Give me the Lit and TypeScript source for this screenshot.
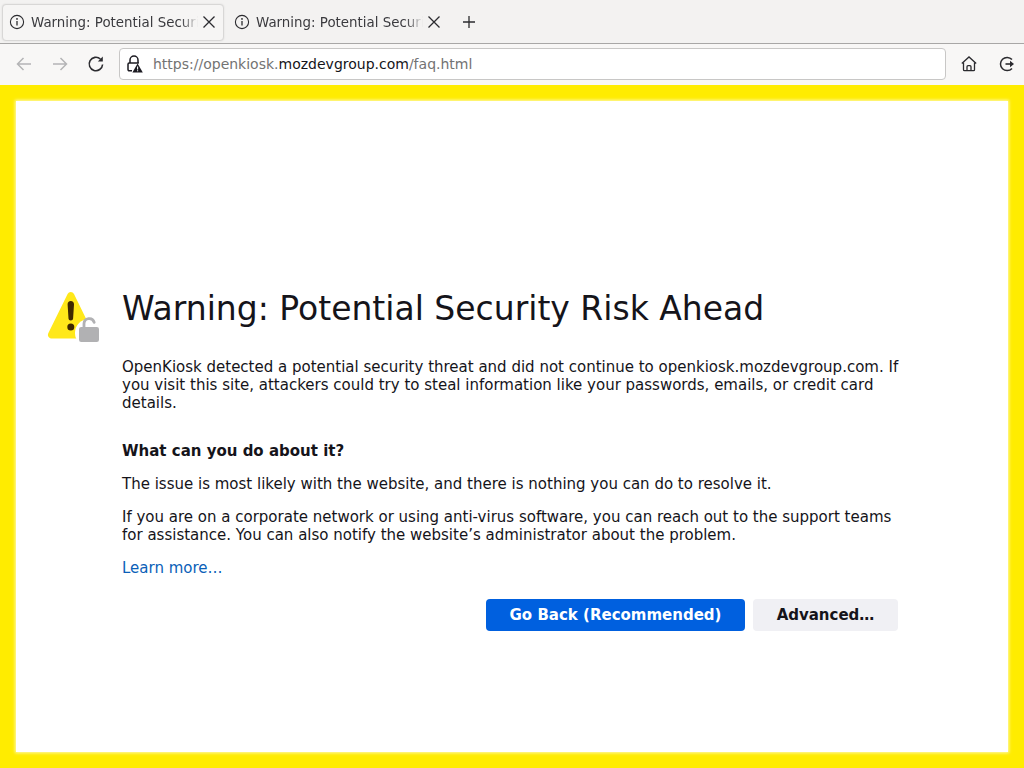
import { LitElement, html, css, svg } from "lit";
import { customElement } from "lit/decorators.js";

const info = svg`<svg class="ic16" viewBox="0 0 16 16" fill="none" stroke="#2b2b2f" stroke-width="1.1"><circle cx="8" cy="8" r="6.6"/><path d="M8 7v4.6" stroke-width="1.3"/><circle cx="8" cy="4.9" r=".9" fill="#2b2b2f" stroke="none"/></svg>`;
const close = svg`<svg class="ic16" viewBox="0 0 16 16" fill="none" stroke="#2b2b2f" stroke-width="1.3"><path d="M2.5 2.5l11 11M13.5 2.5l-11 11"/></svg>`;

@customElement("app-root")
export class AppRoot extends LitElement {
  static styles = css`
    :host { display: flex; flex-direction: column; width: 1024px; height: 768px; overflow: hidden; font-family: "DejaVu Sans", sans-serif; color: #15141a; background: #fff; }
    .ic16 { width: 16px; height: 16px; flex: none; display: block; }
    .tabs { flex: none; box-sizing: border-box; background: #f3f2f1; border-bottom: 1px solid #a8a7a6; display: flex; align-items: flex-start; padding: 4px 0 0 2px; height: 44px; }
    .tab { width: 222px; height: 37px; box-sizing: border-box; padding: 0 6px 1px 6px; display: flex; align-items: center; font-size: 13.4px; color: #3a3a3e; margin-right: 3px; border: 1px solid transparent; border-radius: 4px; }
    .tab.on { background: #f6f5f4; border-color: #d8d7d6; box-shadow: 0 0 2px rgba(0,0,0,.1); }
    .tab .title { flex: 1; min-width: 0; margin-left: 6px; white-space: nowrap; overflow: hidden; -webkit-mask-image: linear-gradient(to right, #000 90%, transparent); mask-image: linear-gradient(to right, #000 90%, transparent); }
    .tab .x { margin-left: 3px; }
    .plus { margin: 10px 0 0 9px; }
    .nav { height: 41px; flex: none; box-sizing: border-box; background: #f8f7f6; display: flex; align-items: center; padding: 0 9px 2px 15px; }
    .nbtn { flex: none; width: 18px; height: 18px; display: block; }
    .back { margin-right: 18px; }
    .fwd { margin-right: 18px; }
    .urlbar { flex: 1; height: 32px; margin: 0 14px 0 14px; box-sizing: border-box; background: #fff; border: 1px solid #c8c7c6; border-radius: 4px; display: flex; align-items: center; padding-left: 5px; font-size: 14px; color: #737373; }
    .urlbar b { font-weight: 400; color: #15141a; }
    .lock { width: 18px; height: 18px; margin-right: 10px; flex: none; }
    .home { margin-right: 19px; }
    .page { flex: 1; min-height: 0; box-sizing: border-box; background: #ffec00; padding: 16px; }
    .inner { height: 100%; box-sizing: border-box; background: #fff; box-shadow: 0 0 3px 1px rgba(255,255,255,.7); display: flex; flex-direction: column; justify-content: flex-start; padding: 185px 107px 0 30px; }
    .content { display: flex; gap: 0; }
    .warn { width: 76px; flex: none; height: 60px; }
    .warn svg { display: block; width: 60px; height: 60px; }
    .text { flex: 1; font-size: 15px; line-height: 18px; min-width: 0; }
    h1 { margin: 0 0 26px; font-size: 33px; font-weight: 400; line-height: 46px; color: #15141a; white-space: nowrap; }
    p { margin: 0 0 15px; }
    .text .intro { margin-bottom: 30px; }
    .text .h { font-weight: 700; margin-bottom: 15px; font-size: 15px; }
    a { text-decoration: none; display: block; margin: 0 0 22px; color: #0b5fb8; }
    .actions { display: flex; justify-content: flex-end; gap: 8px; margin-right: 3px; }
    .btn { height: 32px; box-sizing: border-box; border-radius: 4px; font-size: 15px; font-weight: 700; display: flex; align-items: center; justify-content: center; }
    .pri { width: 259px; background: #0060df; color: #fff; }
    .sec { width: 145px; background: #f0f0f4; color: #15141a; }
  `;

  tab(on: boolean) {
    return html`<div class="tab ${on ? "on" : ""}">${info}<span class="title">Warning: Potential Security Risk Ahead</span><span class="x">${close}</span></div>`;
  }

  render() {
    return html`
      <div class="tabs">
        ${this.tab(true)}${this.tab(false)}
        <svg class="ic16 plus" viewBox="0 0 16 16" fill="none" stroke="#2b2b2f" stroke-width="1.3"><path d="M8 2v12M2 8h12"/></svg>
      </div>
      <div class="nav">
        <svg class="nbtn back" viewBox="0 0 18 18" fill="none" stroke="#b4b4b6" stroke-width="1.5"><path d="M16 9H2.5M8.5 3L2.5 9l6 6"/></svg>
        <svg class="nbtn fwd" viewBox="0 0 18 18" fill="none" stroke="#b4b4b6" stroke-width="1.5"><path d="M2 9h13.5M9.5 3l6 6-6 6"/></svg>
        <svg class="nbtn" viewBox="0 0 18 18" fill="none" stroke="#2b2b2f" stroke-width="1.6"><path d="M15.6 9.5A6.7 6.7 0 1 1 13.4 4"/><path d="M15.8 1.6v5h-5z" fill="#2b2b2f" stroke="none"/></svg>
        <div class="urlbar">
          <svg class="lock" viewBox="0 0 18 18" fill="none" stroke="#1c1b22" stroke-width="1.5"><path d="M5 8V5a4 4 0 0 1 8 0v3"/><path d="M7 15.8H4.2A1.2 1.2 0 0 1 3 14.6V9.2A1.2 1.2 0 0 1 4.2 8h9.6"/><path d="M12.6 8.6L7.4 17.6h10.4z" fill="#1c1b22" stroke="none"/><path d="M12.6 11.4v3M12.6 15.2v1.1" stroke="#fff" stroke-width="1.1"/></svg>
          <span>https://openkiosk.<b>mozdevgroup.com</b>/faq.html</span>
        </div>
        <svg class="nbtn home" viewBox="0 0 18 18" fill="none" stroke="#2b2b2f" stroke-width="1.3"><path d="M1.8 8.6L9 2l7.2 6.6"/><path d="M3.5 7.5v7.2a1 1 0 0 0 1 1h9a1 1 0 0 0 1-1V7.5"/><path d="M7 15.7v-4a1 1 0 0 1 1-1h2a1 1 0 0 1 1 1v4"/></svg>
        <svg class="nbtn" viewBox="0 0 18 18" fill="none" stroke="#2b2b2f" stroke-width="1.5"><path d="M15 4.6A6.6 6.6 0 1 0 15 13.4"/><path d="M8.5 9H15" stroke-width="1.6"/><path d="M13 5.8L17 9l-4 3.2z" fill="#2b2b2f" stroke="none"/></svg>
      </div>
      <div class="page">
        <div class="inner">
          <div class="content">
            <div class="warn">
              <svg viewBox="0 0 60 60">
                <path d="M21.6 8c1.4-2.700 5-2.700 6.400 0l19 39c1.400 2.800-.5 5.500-3.600 5.500H6c-3.100 0-5-2.700-3.600-5.500z" fill="#ffe81a"/>
                <path d="M24.800 15c-2 0-3.300 1.500-3.200 3.400l.9 14.200c.1 1.200 1 2 2.300 2s2.200-.8 2.300-2l.9-14.200c.1-1.900-1.200-3.400-3.200-3.400z" fill="#3e2800"/>
                <circle cx="24.800" cy="41" r="3.500" fill="#3e2800"/>
                <circle cx="43" cy="47" r="14" fill="#fff"/>
                <path d="M38 41v-3.400a5.200 5.200 0 0 1 10.200-1.200" fill="none" stroke="#b1b1b3" stroke-width="2.800" stroke-linecap="round"/>
                <rect x="33" y="41" width="20" height="15" rx="2.200" fill="#b1b1b3"/>
              </svg>
            </div>
            <div class="text">
              <h1>Warning: Potential Security Risk Ahead</h1>
              <p class="intro">OpenKiosk detected a potential security threat and did not continue to openkiosk.mozdevgroup.com. If you visit this site, attackers could try to steal information like your passwords, emails, or credit card details.</p>
              <p class="h">What can you do about it?</p>
              <p>The issue is most likely with the website, and there is nothing you can do to resolve it.</p>
              <p>If you are on a corporate network or using anti-virus software, you can reach out to the support teams for assistance. You can also notify the website’s administrator about the problem.</p>
              <a href="#">Learn more…</a>
              <div class="actions">
                <div class="btn pri">Go Back (Recommended)</div>
                <div class="btn sec">Advanced…</div>
              </div>
            </div>
          </div>
        </div>
      </div>
    `;
  }
}
